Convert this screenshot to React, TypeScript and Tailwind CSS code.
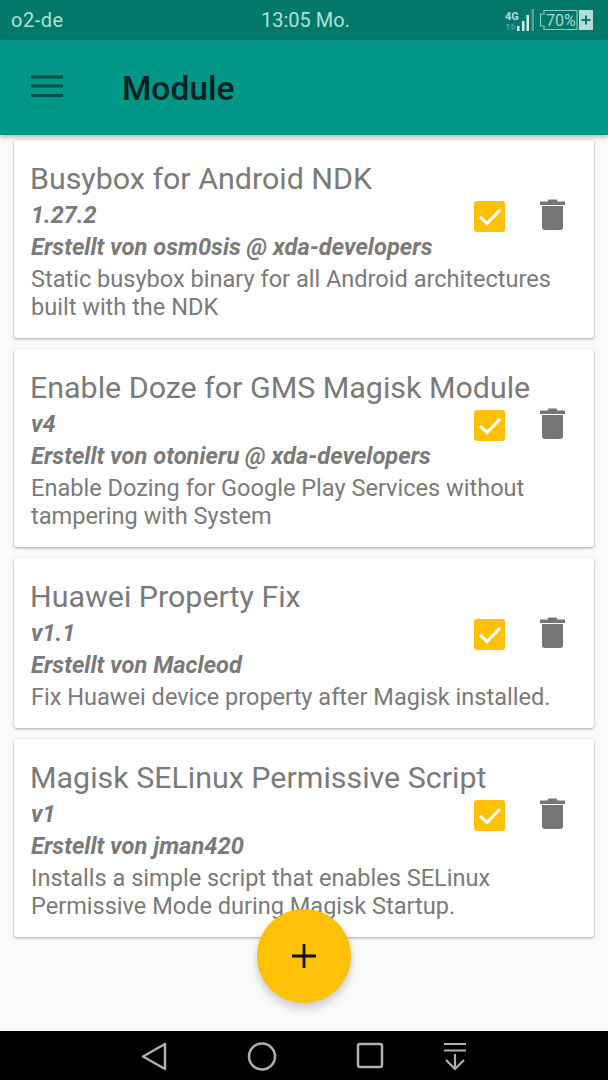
const modules = [
  {
    name: 'Busybox for Android NDK',
    version: '1.27.2',
    author: 'Erstellt von osm0sis @ xda-developers',
    lines: ['Static busybox binary for all Android architectures', 'built with the NDK'],
  },
  {
    name: 'Enable Doze for GMS Magisk Module',
    version: 'v4',
    author: 'Erstellt von otonieru @ xda-developers',
    lines: ['Enable Dozing for Google Play Services without', 'tampering with System'],
  },
  {
    name: 'Huawei Property Fix',
    version: 'v1.1',
    author: 'Erstellt von Macleod',
    lines: ['Fix Huawei device property after Magisk installed.'],
  },
  {
    name: 'Magisk SELinux Permissive Script',
    version: 'v1',
    author: 'Erstellt von jman420',
    lines: ['Installs a simple script that enables SELinux', 'Permissive Mode during Magisk Startup.'],
  },
];

function StatusIcons() {
  return (
    <div className="flex items-center">
      <svg width="34" height="24" viewBox="0 0 34 24" className="mr-[1px]">
        <text x="4" y="12" fontSize="11" fontWeight="700" fill="#b5dcd5" fontFamily="Roboto, sans-serif">4G</text>
        <path d="M7 22v-6M5.500 17.500L7 16l1.500 1.500M11 16l3.500 3-3.500 3z" stroke="#5fae9f" strokeWidth="1" fill="none" />
        <rect x="16" y="18" width="2.500" height="5" fill="#d5ece8" />
        <rect x="21" y="13" width="2.500" height="10" fill="#d5ece8" />
        <rect x="25.500" y="7" width="2.500" height="16" fill="#d5ece8" />
        <rect x="30.500" y="1" width="2.500" height="22" fill="#4fa393" />
      </svg>
      <svg width="39" height="22" viewBox="0 0 39 22" className="ml-[3px]">
        <path d="M5 1.500h33v19H5V17H1.500V5H5z" fill="none" stroke="#8cc9bd" strokeWidth="1.200" />
        <text x="7" y="17" fontSize="16" fill="#a9d8cf" fontFamily="Roboto, sans-serif">70%</text>
      </svg>
      <div className="ml-[1px] flex h-[20px] w-[14px] items-center justify-center bg-[#b5dcd5]">
        <svg width="10" height="10" viewBox="0 0 10 10">
          <path d="M5 0.500v9M0.500 5h9" stroke="#00796b" strokeWidth="2" />
        </svg>
      </div>
    </div>
  );
}

function TrashIcon() {
  return (
    <svg width="25" height="31" viewBox="0 0 25 31">
      <path d="M0 2.500h7.500L8.500 0.500h8l1 2H25V6H0z" fill="#757575" />
      <path d="M2 7h21v21a3 3 0 0 1-3 3H5a3 3 0 0 1-3-3z" fill="#757575" />
    </svg>
  );
}

function CheckIcon() {
  return (
    <div className="mt-[2px] flex h-[31px] w-[31px] items-center justify-center rounded-[3px] bg-[#ffc107]">
      <svg width="24" height="20" viewBox="0 0 24 20">
        <path d="M2 10l7 6.500L22 3" fill="none" stroke="#ffffff" strokeWidth="3.200" />
      </svg>
    </div>
  );
}

export default function App() {
  return (
    <div className="relative flex h-[1080px] w-[608px] flex-col overflow-hidden bg-[#fafafa] font-['Roboto',sans-serif]">
      {/* Status bar */}
      <div className="flex h-[40px] shrink-0 items-center justify-between bg-[#00796b] pl-[11px] pr-[15px] text-[20px] text-[#b2dfd8]">
        <span className="w-[140px] tracking-[0.5px]">o2-de</span>
        <span className="ml-[7px]">13:05 Mo.</span>
        <div className="flex w-[140px] justify-end">
          <StatusIcons />
        </div>
      </div>

      {/* App bar */}
      <div className="z-10 flex h-[95px] shrink-0 items-center bg-[#009688] pl-[31px] shadow-[0_2px_5px_rgba(0,0,0,0.28)]">
        <svg width="33" height="23" viewBox="0 0 33 23" className="mb-[2px]">
          <path d="M0 2h32M0 11h32M0 20.500h32" stroke="#004d45" strokeWidth="3" />
        </svg>
        <h1 className="ml-[58px] mt-[3px] text-[33.600px] font-medium leading-none text-[#03211e]">Module</h1>
      </div>

      {/* Module list */}
      <div className="flex flex-col gap-[11px] px-[14px] pt-[5px]">
        {modules.map((m) => (
          <div
            key={m.name}
            className="flex items-start rounded-[3px] bg-white pb-[17px] pl-[17px] pr-[29px] pt-[21px] shadow-[0_1px_3px_rgba(0,0,0,0.35)]"
          >
            <div className="min-w-0 flex-1 text-[#7a7a7a]">
              <div className="ml-[-1px] h-[38px] whitespace-nowrap text-[30.400px] leading-[36px]">{m.name}</div>
              <div className="h-[32px] text-[23.500px] font-bold italic leading-[32px]">{m.version}</div>
              <div className="h-[34px] whitespace-nowrap text-[23.700px] font-bold italic leading-[32px]">{m.author}</div>
              {m.lines.map((line) => (
                <div key={line} className="h-[28px] whitespace-nowrap text-[23.550px] leading-[28px]">
                  {line}
                </div>
              ))}
            </div>
            <div className="mt-[38px] flex shrink-0 items-start gap-[35px]">
              <CheckIcon />
              <TrashIcon />
            </div>
          </div>
        ))}
      </div>

      {/* Add button */}
      <div className="absolute left-[257px] top-[909px] flex h-[94px] w-[94px] items-center justify-center rounded-full bg-[#ffc107] shadow-[0_5px_10px_rgba(0,0,0,0.2)]">
        <svg width="24" height="24" viewBox="0 0 24 24">
          <path d="M12 0v24M0 12h24" stroke="#111111" strokeWidth="2.800" />
        </svg>
      </div>

      {/* Navigation bar */}
      <div className="absolute bottom-0 left-0 right-0 flex h-[49px] items-center bg-black pl-[141px]">
        <svg width="326" height="30" viewBox="0 0 326 30" fill="none" stroke="#b0b0b0" strokeWidth="2.500" strokeLinejoin="round">
          <path d="M24 3v25L2 15.500z" />
          <circle cx="121" cy="15.500" r="13" />
          <rect x="217" y="3" width="24" height="23" rx="2" />
          <path d="M303 3h22M303 9.500h22M314 13v15M305 19l9 9 9-9" strokeWidth="2.200" />
        </svg>
      </div>
    </div>
  );
}
